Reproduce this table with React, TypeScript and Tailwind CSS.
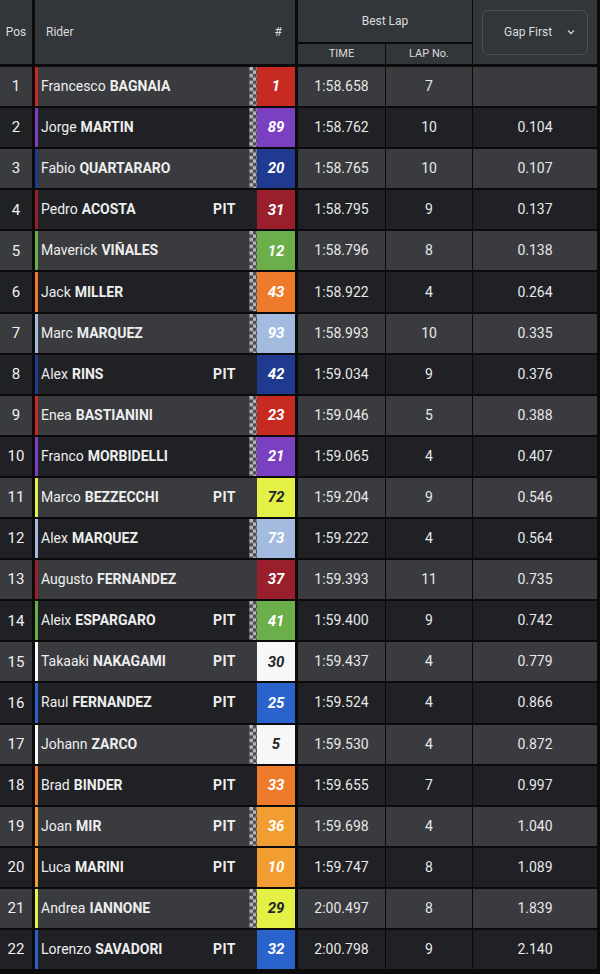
import React from "react";

type Rider = {
  pos: number;
  first: string;
  last: string;
  pit: boolean;
  num: string;
  color: string;
  dark: boolean;
  flag: boolean;
  time: string;
  lap: string;
  gap: string;
};

const RED = "#c62a20";
const PURPLE = "#7b3fc2";
const NAVY = "#1f3a8f";
const MAROON = "#9a1f2c";
const GREEN = "#6cae4a";
const ORANGE = "#ee7a2c";
const LIGHTBLUE = "#a4bbe0";
const YELLOW = "#e4f046";
const WHITE = "#f7f7f7";
const BLUE = "#2a63cc";
const AMBER = "#f29d32";

const riders: Rider[] = [
  { pos: 1, first: "Francesco", last: "BAGNAIA", pit: false, num: "1", color: RED, dark: false, flag: true, time: "1:58.658", lap: "7", gap: "" },
  { pos: 2, first: "Jorge", last: "MARTIN", pit: false, num: "89", color: PURPLE, dark: false, flag: true, time: "1:58.762", lap: "10", gap: "0.104" },
  { pos: 3, first: "Fabio", last: "QUARTARARO", pit: false, num: "20", color: NAVY, dark: false, flag: true, time: "1:58.765", lap: "10", gap: "0.107" },
  { pos: 4, first: "Pedro", last: "ACOSTA", pit: true, num: "31", color: MAROON, dark: false, flag: false, time: "1:58.795", lap: "9", gap: "0.137" },
  { pos: 5, first: "Maverick", last: "VIÑALES", pit: false, num: "12", color: GREEN, dark: false, flag: true, time: "1:58.796", lap: "8", gap: "0.138" },
  { pos: 6, first: "Jack", last: "MILLER", pit: false, num: "43", color: ORANGE, dark: false, flag: true, time: "1:58.922", lap: "4", gap: "0.264" },
  { pos: 7, first: "Marc", last: "MARQUEZ", pit: false, num: "93", color: LIGHTBLUE, dark: false, flag: true, time: "1:58.993", lap: "10", gap: "0.335" },
  { pos: 8, first: "Alex", last: "RINS", pit: true, num: "42", color: NAVY, dark: false, flag: false, time: "1:59.034", lap: "9", gap: "0.376" },
  { pos: 9, first: "Enea", last: "BASTIANINI", pit: false, num: "23", color: RED, dark: false, flag: true, time: "1:59.046", lap: "5", gap: "0.388" },
  { pos: 10, first: "Franco", last: "MORBIDELLI", pit: false, num: "21", color: PURPLE, dark: false, flag: true, time: "1:59.065", lap: "4", gap: "0.407" },
  { pos: 11, first: "Marco", last: "BEZZECCHI", pit: true, num: "72", color: YELLOW, dark: true, flag: false, time: "1:59.204", lap: "9", gap: "0.546" },
  { pos: 12, first: "Alex", last: "MARQUEZ", pit: false, num: "73", color: LIGHTBLUE, dark: false, flag: true, time: "1:59.222", lap: "4", gap: "0.564" },
  { pos: 13, first: "Augusto", last: "FERNANDEZ", pit: false, num: "37", color: MAROON, dark: false, flag: false, time: "1:59.393", lap: "11", gap: "0.735" },
  { pos: 14, first: "Aleix", last: "ESPARGARO", pit: true, num: "41", color: GREEN, dark: false, flag: true, time: "1:59.400", lap: "9", gap: "0.742" },
  { pos: 15, first: "Takaaki", last: "NAKAGAMI", pit: true, num: "30", color: WHITE, dark: true, flag: false, time: "1:59.437", lap: "4", gap: "0.779" },
  { pos: 16, first: "Raul", last: "FERNANDEZ", pit: true, num: "25", color: BLUE, dark: false, flag: false, time: "1:59.524", lap: "4", gap: "0.866" },
  { pos: 17, first: "Johann", last: "ZARCO", pit: false, num: "5", color: WHITE, dark: true, flag: true, time: "1:59.530", lap: "4", gap: "0.872" },
  { pos: 18, first: "Brad", last: "BINDER", pit: true, num: "33", color: ORANGE, dark: false, flag: false, time: "1:59.655", lap: "7", gap: "0.997" },
  { pos: 19, first: "Joan", last: "MIR", pit: true, num: "36", color: AMBER, dark: false, flag: true, time: "1:59.698", lap: "4", gap: "1.040" },
  { pos: 20, first: "Luca", last: "MARINI", pit: true, num: "10", color: AMBER, dark: false, flag: false, time: "1:59.747", lap: "8", gap: "1.089" },
  { pos: 21, first: "Andrea", last: "IANNONE", pit: false, num: "29", color: YELLOW, dark: true, flag: true, time: "2:00.497", lap: "8", gap: "1.839" },
  { pos: 22, first: "Lorenzo", last: "SAVADORI", pit: true, num: "32", color: BLUE, dark: false, flag: false, time: "2:00.798", lap: "9", gap: "2.140" },
];

function Checker() {
  return (
    <svg width="8" height="40" viewBox="0 0 8 40" className="block shrink-0 h-full" preserveAspectRatio="none">
      <defs>
        <pattern id="chk" width="7" height="7" patternUnits="userSpaceOnUse">
          <rect width="7" height="7" fill="#4a4c50" />
          <rect x="0.5" y="0" width="3.5" height="3.5" fill="#b4b6b9" />
          <rect x="4" y="3.5" width="3.5" height="3.5" fill="#b4b6b9" />
        </pattern>
      </defs>
      <rect width="8" height="40" fill="url(#chk)" />
    </svg>
  );
}

function Row({ r }: { r: Rider }) {
  const bg = r.pos % 2 === 1 ? "bg-[#393b3f]" : "bg-[#1f2125]";
  return (
    <div className="flex h-[39.1px] gap-[3px]">
      <div className={`${bg} w-[32px] flex items-center justify-center text-[15px] text-[#f0f0f0]`}>
        {r.pos}
      </div>
      <div className={`${bg} w-[260px] flex items-stretch`}>
        <div className="w-[3px]" style={{ backgroundColor: r.color }} />
        <div className="flex-1 flex items-center pl-[3px] text-[14px] text-[#eeeeee] whitespace-nowrap">
          <span>{r.first}</span>
          <span className="font-bold ml-[4px]">{r.last}</span>
        </div>
        {r.pit && (
          <div className="flex items-center pr-[13px] text-[14px] font-bold text-[#eeeeee] tracking-[0.5px]">
            PIT
          </div>
        )}
        <div className="w-[8px] shrink-0">{r.flag && <Checker />}</div>
        <div
          className={`w-[38px] shrink-0 flex items-center justify-center text-[15px] font-bold italic ${r.dark ? "text-[#222428]" : "text-white"}`}
          style={{ backgroundColor: r.color }}
        >
          {r.num}
        </div>
      </div>
      <div className="flex gap-[1px]">
        <div className={`${bg} w-[87px] flex items-center justify-center text-[14px] text-[#e8e8e8]`}>
          {r.time}
        </div>
        <div className={`${bg} w-[86px] flex items-center justify-center text-[14px] text-[#e8e8e8]`}>
          {r.lap}
        </div>
        <div className={`${bg} w-[124px] flex items-center justify-center text-[14px] text-[#e8e8e8]`}>
          {r.gap}
        </div>
      </div>
    </div>
  );
}

export default function App() {
  return (
    <div
      className="w-[600px] h-[974px] bg-[#0b0b0c] overflow-hidden"
      style={{ fontFamily: "Roboto, 'Liberation Sans', sans-serif" }}
    >
      <div className="flex h-[64px] gap-[3px]">
        <div className="bg-[#323539] w-[32px] flex items-center justify-center text-[12px] text-[#dcdcdc]">
          Pos
        </div>
        <div className="bg-[#323539] w-[260px] flex items-center justify-between pl-[11px] pr-[13px] text-[12px] text-[#dcdcdc]">
          <span>Rider</span>
          <span>#</span>
        </div>
        <div className="flex gap-[1px]">
          <div className="flex flex-col gap-[2px] w-[174px]">
            <div className="bg-[#323539] h-[42px] flex items-center justify-center text-[12px] text-[#dcdcdc]">
              Best Lap
            </div>
            <div className="flex gap-[1px] flex-1">
              <div className="bg-[#323539] w-[87px] flex items-center justify-center text-[11px] text-[#dcdcdc]">
                TIME
              </div>
              <div className="bg-[#323539] w-[86px] flex items-center justify-center text-[11px] text-[#dcdcdc]">
                LAP No.
              </div>
            </div>
          </div>
          <div className="bg-[#323539] w-[124px] flex items-center justify-center">
            <div className="w-[106px] h-[45px] rounded-[6px] border border-[#4b4e53] flex items-center justify-between pl-[21px] pr-[11px] text-[12px] text-[#dcdcdc]">
              <span>Gap First</span>
              <svg width="10" height="10" viewBox="0 0 10 10" fill="none" stroke="#d0d0d0" strokeWidth="1.3">
                <path d="M2 3.5 L5 6.5 L8 3.5" />
              </svg>
            </div>
          </div>
        </div>
      </div>
      <div className="flex flex-col gap-[2px] mt-[3px]">
        {riders.map((r) => (
          <Row key={r.pos} r={r} />
        ))}
      </div>
    </div>
  );
}
